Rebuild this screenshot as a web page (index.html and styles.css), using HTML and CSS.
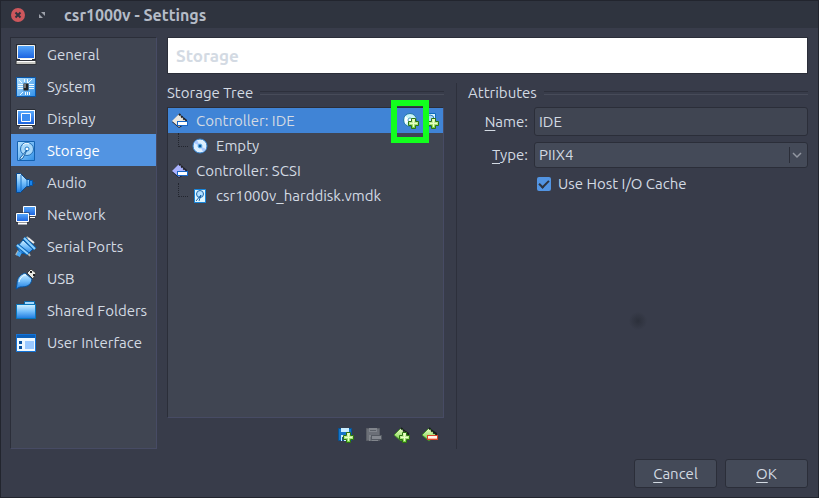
FILE: index.html
```html
<!DOCTYPE html>
<html lang="en">
<head>
<meta charset="utf-8">
<meta name="viewport" content="width=device-width, initial-scale=1">
<title>csr1000v - Settings</title>
<link rel="stylesheet" href="styles.css">
</head>
<body>
<svg class="defs" aria-hidden="true">
  <defs>
    <linearGradient id="screen" x1="0" y1="0" x2="0" y2="1"><stop offset="0" stop-color="#58a9fb"/><stop offset="1" stop-color="#1b62e0"/></linearGradient>
    <linearGradient id="sky" x1="0" y1="0" x2="1" y2="1"><stop offset="0" stop-color="#b5e2ff"/><stop offset="1" stop-color="#2f8fe8"/></linearGradient>
    <linearGradient id="body" x1="0" y1="0" x2="0" y2="1"><stop offset="0" stop-color="#d5f1ff"/><stop offset=".5" stop-color="#72bdfa"/><stop offset="1" stop-color="#1d7be0"/></linearGradient>
    <linearGradient id="green" x1="0" y1="0" x2="0" y2="1"><stop offset="0" stop-color="#f2ffd0"/><stop offset="1" stop-color="#6fd03a"/></linearGradient>
    <symbol id="plus" viewBox="0 0 11 11"><path d="M3.500.5h4v3h3v4h-3v3h-4v-3h-3v-4h3z" fill="url(#green)" stroke="#2c7510"/><path d="M5.500 2v7M2 5.500h7" stroke="#e8ffc4"/></symbol>
    <symbol id="controller" viewBox="0 0 16 16"><path d="M0 9l7 6 8-5V7L7 1z" fill="#1c2030"/><path d="M0 8l7-7 7 7-7 6z" fill="currentColor"/><path d="M7 1l7 7" stroke="#222" stroke-width="2" stroke-dasharray="2 1"/><path d="M5 8h11v5H5z" fill="#1767c8"/><path d="M6 9h9v3H6z" fill="#fff"/></symbol>
  </defs>
</svg>
<div class="window">
  <header class="titlebar">
    <button class="close" aria-label="Close"><svg width="14" height="14" viewBox="0 0 14 14"><circle cx="7" cy="7" r="7" fill="#cd575c"/><path d="M4.500 4.500l5 5m0-5l-5 5" stroke="#2f343f" stroke-width="2"/></svg></button>
    <button class="restore" aria-label="Maximize"><svg width="8" height="8" viewBox="0 0 8 8"><path d="M3 1h4v4zM1 3v4h4z" fill="#9da1aa"/></svg></button>
    <h1>csr1000v - Settings</h1>
  </header>
  <div class="content">
    <nav class="sidebar">
      <a href="#general"><svg viewBox="0 0 22 22"><path d="M2.500 1.500h17v14h-17z" fill="url(#screen)" stroke="#292d35" stroke-width="3"/><path d="M2.500 1.500h17v13h-17z" fill="url(#screen)" stroke="#f4f4f0"/><path d="M5 15.500h12" stroke="#fff"/><path d="M1 16.500h20v4H1z" fill="#c9c9c4" stroke="#33363d"/><path d="M2 17.500h18" stroke="#fff"/></svg>General</a>
      <a href="#system"><svg viewBox="0 0 22 22"><path d="M1.500 1.500h19v19h-19z" fill="url(#sky)" stroke="#0755a8"/><path d="M3 8.500h5M3 10.500h5M3 12.500h5M14 8.500h5M14 10.500h5M14 12.500h5M10.500 16v3M12.500 16v3M14.500 16v3M9.500 3v3M12.500 3v4M17 3l-4 4M5 19l3-3M4 4l3 3" stroke="#effaff"/><path d="M8.500 7.500h5v7h-5z" fill="#222"/><path d="M9 8h2v4H9z" fill="#777"/></svg>System</a>
      <a href="#display"><svg viewBox="0 0 22 22"><path d="M1.500 1.500h19v16h-19z" fill="#fff" stroke="#292d35"/><path d="M3 3h16v13H3z" fill="url(#screen)"/><path d="M6.500 5.500h9v8h-9z" fill="#3c8df1" stroke="#fff"/><path d="M5 18.500h12M4 20h14" stroke="#fff"/></svg>Display</a>
      <a class="current" aria-current="page" href="#storage"><svg viewBox="0 0 22 22"><path d="M2.500 1.500h17v19h-17z" fill="url(#sky)" stroke="#1462b1"/><circle cx="12" cy="9" r="6.500" fill="#a8d8fa" stroke="#226eb7"/><circle cx="12" cy="9" r="2" fill="#fff" stroke="#207acb"/><path d="M5 18l7-8-4 8-3 2z" fill="#dcf4ff" stroke="#1761a8"/><path d="M8 5c2-2 5-2 6-1" stroke="#fff" fill="none"/></svg>Storage</a>
      <a href="#audio"><svg viewBox="0 0 22 22"><path d="M1.500 1.500h4l6 6h3v7h-3l-6 6h-4z" fill="url(#body)" stroke="#07498f"/><path d="M6 3v16M12 8v6" stroke="#1973c8"/><path d="M14.500 8.500h3v5h-3zM18 11h2" fill="#1883ec" stroke="#0756a8"/></svg>Audio</a>
      <a href="#network"><svg viewBox="0 0 22 22"><path d="M8.500 2.500h12v9h-12z" fill="url(#screen)" stroke="#fff"/><path d="M15 13.500h5" stroke="#fff"/><path d="M.5 8.500h14v10H.5z" fill="#292d35"/><path d="M1.500 9.500h12v8h-12z" fill="url(#screen)" stroke="#fff"/><path d="M3 19.500h9" stroke="#fff" stroke-width="2"/></svg>Network</a>
      <a href="#serial"><svg viewBox="0 0 22 22"><path d="M4 14l-3 5M13 17l2 3M10 3l3-2" stroke="#b8b8b0" stroke-width="2"/><path d="M8 4l10 9-5 5-8-1-3-6z" fill="url(#body)" stroke="#07569f"/><path d="M5 16l-2 4" stroke="#4aa9f4" stroke-width="4"/><path d="M9 2l11 11M2 9l11 9" stroke="#0863b5" stroke-width="4"/><path d="M9 2l11 11M2 9l11 9" stroke="#8fd2ff" stroke-width="2"/><path d="M13 2l6 5" stroke="#eee" stroke-width="2"/></svg>Serial Ports</a>
      <a href="#usb"><svg viewBox="0 0 22 22"><path d="M12 5l4-4 5 4-3 6z" fill="#e8e8e2" stroke="#393b3e"/><path d="M15 4h2m1 3h2" stroke="#222" stroke-width="2"/><path d="M10 5l7 6c-1 7-6 8-12 8l-4 2 1-5C2 10 5 7 10 5z" fill="url(#body)" stroke="#07549e"/><path d="M4 14c1-4 4-7 7-7" stroke="#e9faff" fill="none"/></svg>USB</a>
      <a href="#shared"><svg viewBox="0 0 22 22"><path d="M9.500 5V1.500h10V8h-10z" fill="#a6d8fc" stroke="#086aac"/><path d="M1.500 4.500h19v14h-19z" fill="url(#body)" stroke="#0876bd"/><path d="M2 5.500h18" stroke="#c5edff"/></svg>Shared Folders</a>
      <a href="#interface"><svg viewBox="0 0 22 22"><path d="M1.500 2.500h19v17h-19z" fill="#eef8ff" stroke="#1172d8"/><path d="M2 3h18v3H2z" fill="#0b5fb9"/><path d="M4 9h3v3H4zM4 14h3v3H4z" fill="#0751a0"/><path d="M10 9h9v8h-9z" fill="#9bc9ff"/></svg>User Interface</a>
    </nav>
    <main>
      <h2 class="page-title">Storage</h2>
      <div class="panels">
        <section class="storage">
          <h3 class="group-title">Storage Tree</h3>
          <ul class="tree">
            <li>
              <div class="node selected"><svg class="silver" viewBox="0 0 16 16"><use href="#controller"/></svg><span>Controller: IDE</span>
                <button class="add-disc" aria-label="Add optical drive"><svg viewBox="0 0 16 16"><circle cx="7" cy="7" r="6.500" fill="#c9f4f5" stroke="#2475a6"/><path d="M7 7L2 3v8z" fill="#fff"/><circle cx="7" cy="7" r="2" fill="#fff" stroke="#4ea1be"/><use href="#plus" x="5" y="5" width="11" height="11"/></svg></button>
                <button class="add-disk" aria-label="Add hard disk"><svg viewBox="0 0 16 16"><path d="M1.500.5h11v13h-11z" fill="#d6f2ff" stroke="#0c6bbd"/><circle cx="7" cy="6" r="4" fill="#a9dafa" stroke="#3680b8"/><use href="#plus" x="5" y="5" width="11" height="11"/></svg></button>
              </div>
              <ul><li class="node"><svg viewBox="0 0 16 16"><circle cx="8" cy="8" r="7" fill="#dcefff" stroke="#3182d0"/><path d="M8 8l-6-3 3-3zM8 8l6 3-3 3z" fill="#a8c9ff"/><circle cx="8" cy="8" r="2" fill="#0b58a2" stroke="#69b8ed"/></svg><span>Empty</span></li></ul>
            </li>
            <li>
              <div class="node"><svg class="violet" viewBox="0 0 16 16"><use href="#controller"/></svg><span>Controller: SCSI</span></div>
              <ul><li class="node"><svg viewBox="0 0 16 16"><path d="M2.500 1.500h11v13h-11z" fill="#dff6ff" stroke="#1685db"/><circle cx="8" cy="6" r="3.500" fill="#b4e1ff" stroke="#1e65aa"/><path d="M4 13l5-6-2 6" fill="none" stroke="#1763a9"/></svg><span>csr1000v_harddisk.vmdk</span></li></ul>
            </li>
          </ul>
          <div class="toolbar">
            <button aria-label="Add attachment"><svg viewBox="0 0 16 16"><path d="M.5 1.500h13v12H.5z" fill="#1674c8" stroke="#075393"/><path d="M3 1h8v4H3zM3 8h9v6H3z" fill="#c9edff"/><path d="M5 10v4" stroke="#17528c" stroke-width="2"/><use href="#plus" x="5" y="5" width="11" height="11"/></svg></button>
            <button aria-label="Remove attachment" disabled><svg viewBox="0 0 16 16"><path d="M.5 1.500h13v12H.5z" fill="#6b6f77" stroke="#5a5e66"/><path d="M3 1h8v4H3zM3 8h9v6H3z" fill="#81858c"/><path d="M4 3.500h6M5 10v4" stroke="#5b6068"/><path d="M5 8h11v5H5z" fill="#555a62"/><path d="M6 9h9v3H6z" fill="#858990"/></svg></button>
            <button aria-label="Add controller"><svg viewBox="0 0 16 16"><path d="M1 9l6 5 8-6V6L7 1z" fill="#171d1b"/><path d="M0 8l7-7 7 7-7 6z" fill="url(#green)" stroke="#438d2a"/><path d="M7 1l7 7" stroke="#171d1b" stroke-width="2" stroke-dasharray="2 1"/><use href="#plus" x="5" y="5" width="11" height="11"/></svg></button>
            <button aria-label="Remove controller"><svg viewBox="0 0 16 16"><path d="M1 9l6 5 8-6V6L7 1z" fill="#171d1b"/><path d="M0 8l7-7 7 7-7 6z" fill="url(#green)" stroke="#438d2a"/><path d="M7 1l7 7" stroke="#171d1b" stroke-width="2" stroke-dasharray="2 1"/><path d="M5 8h11v5H5z" fill="#d84628"/><path d="M6 9h9v3H6z" fill="#ffb8a4"/><path d="M6 9h9v2H6z" fill="#fff3eb"/></svg></button>
          </div>
        </section>
        <section class="attributes">
          <h3 class="group-title">Attributes</h3>
          <form class="form">
            <label for="name"><u>N</u>ame:</label>
            <input id="name" class="field" type="text" value="IDE">
            <label for="type"><u>T</u>ype:</label>
            <div class="select-wrap">
              <select id="type"><option>PIIX4</option></select>
              <svg width="18" height="16" viewBox="0 0 18 16"><path d="M.5 0v16" stroke="#2b2e39"/><path d="M4 6l4 4 4-4" fill="none" stroke="#9297a1" stroke-width="1.500"/></svg>
            </div>
            <label class="check"><input type="checkbox" checked><span>Use Host I/O Cache</span></label>
          </form>
          <div class="smudge"></div>
        </section>
      </div>
    </main>
  </div>
  <footer class="actions">
    <button><span><u>C</u>ancel</span></button>
    <button><span><u>O</u>K</span></button>
  </footer>
</div>
</body>
</html>
```
FILE: styles.css
```css
* { box-sizing: border-box; }

body {
  margin: 0;
  background: #383c4a;
  color: #d3dae3;
  font: 15px/20px "Ubuntu", "Noto Sans", sans-serif;
}

button, input, select { font: inherit; color: inherit; }
h1, h2, h3, ul { margin: 0; padding: 0; }
ul { list-style: none; }
u { text-underline-offset: 3px; text-decoration-thickness: 1px; }
.defs { position: absolute; width: 0; height: 0; }

.window {
  min-height: 100vh;
  display: flex;
  flex-direction: column;
  border: 1px solid #22252e;
  border-top: 0;
}

.titlebar {
  height: 28px;
  display: flex;
  align-items: center;
  padding: 0 10px;
  background: #2f343f;
  border-top: 1px solid #22252e;
}
.titlebar button { display: flex; padding: 0; border: 0; background: none; }
.titlebar .restore { margin-left: 13px; }
.titlebar h1 {
  margin-left: 18px;
  color: #b5bcc7;
  font-size: 16px;
  line-height: 20px;
}

.content {
  flex: 1;
  display: flex;
  gap: 10px;
  padding: 9px 10px 0 9px;
}

.sidebar {
  flex: 0 0 147px;
  border: 1px solid #2b2e39;
  border-right-color: #474b64;
  border-bottom-color: #474b64;
  background: #404552;
}
.sidebar a {
  height: 32px;
  display: flex;
  align-items: center;
  gap: 10px;
  padding-top: 1px;
  padding-left: 4px;
  color: inherit;
  text-decoration: none;
  white-space: nowrap;
}
.sidebar svg { flex: none; width: 22px; height: 22px; }
.sidebar .current { background: #5294e2; color: #fff; }

main { flex: 1; min-width: 0; display: flex; flex-direction: column; }
.page-title {
  height: 37px;
  padding: 8px;
  border: 1px solid #2b2e39;
  background: #fff;
  color: #d3dae3;
  font-size: 17px;
  line-height: 20px;
}

.panels { flex: 1; display: flex; padding-top: 9px; }
.storage {
  flex: 0 0 290px;
  display: flex;
  flex-direction: column;
  padding-right: 12px;
  border-right: 1px solid #2d303c;
}
.attributes { flex: 1; padding-left: 11px; }

.group-title {
  display: flex;
  align-items: center;
  gap: 7px;
  height: 20px;
  font-size: 15px;
  font-weight: 400;
  line-height: 20px;
}
.group-title::after {
  content: "";
  flex: 1;
  height: 2px;
  border-top: 1px solid #2d303c;
  border-bottom: 1px solid #474b59;
}

.tree {
  flex: 1;
  margin-top: 4px;
  border: 1px solid #2b2e39;
  border-right-color: #474b64;
  border-bottom-color: #474b64;
  background: #404552;
}
.node {
  height: 25px;
  display: flex;
  align-items: center;
  gap: 8px;
  padding: 0 4px;
}
.node svg { flex: none; width: 16px; height: 16px; }
.node span { flex: 1; }
.node.selected { background: #4084d6; }
.node button { display: flex; padding: 0; border: 0; background: none; }
.node .silver { color: #ece8df; }
.node .violet { color: #a9b2ff; }
.tree ul .node { padding-left: 10px; }
.tree ul .node::before {
  content: "";
  width: 9px;
  height: 13px;
  margin: 0 -4px 12px 0;
  border-left: 1px dotted #22252e;
  border-bottom: 1px dotted #22252e;
}
.add-disc { position: relative; margin-right: -4px; }
.add-disc::after {
  content: "";
  position: absolute;
  inset: -13px -10px -14px -12px;
  border: 6px solid #12ff1e;
}

.toolbar {
  display: flex;
  justify-content: flex-end;
  gap: 12px;
  padding: 9px 6px 6px;
}
.toolbar button { display: flex; padding: 0; border: 0; background: none; }
.toolbar svg { width: 16px; height: 16px; }

.form {
  display: grid;
  grid-template-columns: 60px 1fr;
  column-gap: 6px;
  row-gap: 6px;
  align-items: center;
  margin-top: 4px;
}
.form > label:not(.check) { text-align: right; }
.field, .select-wrap select {
  width: 100%;
  height: 29px;
  padding: 0 4px;
  border: 1px solid #2b2e39;
  border-radius: 3px;
  background: #404552;
}
.select-wrap { position: relative; }
.select-wrap select {
  display: block;
  height: 26px;
  appearance: none;
  background: #444a58;
}
.select-wrap svg { position: absolute; right: 1px; top: 5px; pointer-events: none; }
.check { grid-column: 2; display: flex; align-items: center; gap: 7px; padding-left: 3px; }
.check input {
  appearance: none;
  width: 14px;
  height: 14px;
  margin: 0;
  border-radius: 2px;
  background: #5294e2;
  display: grid;
  place-items: center;
}
.check input:checked::before {
  content: "";
  width: 8px;
  height: 4px;
  margin-bottom: 3px;
  border: solid #2f343f;
  border-width: 0 0 2px 2px;
  transform: rotate(-45deg);
}

.smudge {
  width: 20px;
  height: 20px;
  margin: 117px auto 0;
  background: radial-gradient(circle, #2c303b, #383c4a 65%);
}

.actions {
  display: flex;
  justify-content: flex-end;
  gap: 8px;
  padding: 10px 10px 9px;
}
.actions button {
  width: 83px;
  height: 29px;
  padding: 0;
  border: 1px solid #2b2e39;
  border-radius: 3px;
  background: #444a58;
}
```
